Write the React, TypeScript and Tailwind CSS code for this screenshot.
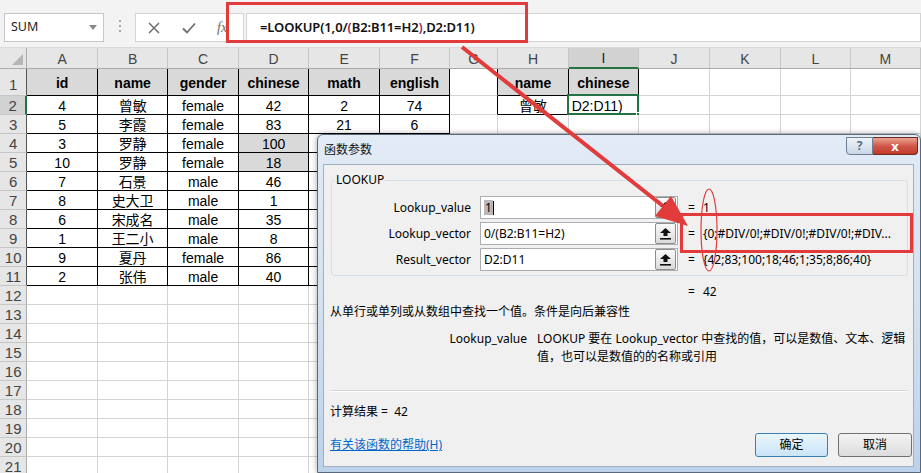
import React from 'react';

const W = [
  'w-[28px]', 'w-[72px]', 'w-[72px]', 'w-[72px]', 'w-[72px]', 'w-[72px]', 'w-[72px]',
  'w-[49px]', 'w-[72px]', 'w-[72px]', 'w-[72px]', 'w-[73px]', 'w-[71px]', 'w-[72px]',
];
const LETTERS = ['', 'A', 'B', 'C', 'D', 'E', 'F', 'G', 'H', 'I', 'J', 'K', 'L', 'M'];

const DATA: string[][] = [
  ['id', 'name', 'gender', 'chinese', 'math', 'english'],
  ['4', '曾敏', 'female', '42', '2', '74'],
  ['5', '李霞', 'female', '83', '21', '6'],
  ['3', '罗静', 'female', '100', '', ''],
  ['10', '罗静', 'female', '18', '', ''],
  ['7', '石景', 'male', '46', '', ''],
  ['8', '史大卫', 'male', '1', '', ''],
  ['6', '宋成名', 'male', '35', '', ''],
  ['1', '王二小', 'male', '8', '', ''],
  ['9', '夏丹', 'female', '86', '', ''],
  ['2', '张伟', 'male', '40', '', ''],
];

function TopBar() {
  return (
    <div className="flex h-[48px] items-start bg-[#f3f3f3] border-b border-[#dadada] font-['Noto_Sans','Noto_Sans_CJK_SC',sans-serif]">
      <div className="mt-[13px] ml-[4px] flex h-[29px] w-[100px] items-center justify-between bg-white border border-[#c6c6c6] pl-[6px] pr-[6px]">
        <span className="text-[12.5px] text-[#222]">SUM</span>
        <svg width="8" height="5" viewBox="0 0 8 5"><polygon points="0,0 8,0 4,5" fill="#8a8a8a" /></svg>
      </div>
      <div className="mt-[20px] ml-[15px] flex flex-col gap-[3px]">
        <div className="h-[2px] w-[2px] bg-[#a8a8a8]" />
        <div className="h-[2px] w-[2px] bg-[#a8a8a8]" />
        <div className="h-[2px] w-[2px] bg-[#a8a8a8]" />
      </div>
      <div className="mt-[13px] ml-[14px] flex h-[29px] w-[109px] items-center bg-white border border-[#d4d4d4]">
        <svg className="ml-[12px]" width="12" height="12" viewBox="0 0 12 12">
          <path d="M1 1 L11 11 M11 1 L1 11" stroke="#6e6e6e" strokeWidth="1.5" />
        </svg>
        <svg className="ml-[22px]" width="14" height="12" viewBox="0 0 14 12">
          <path d="M1 6.5 L5 10.5 L13 1.5" stroke="#6e6e6e" strokeWidth="1.8" fill="none" />
        </svg>
        <span className="ml-[21px] font-['Liberation_Serif',serif] italic text-[14px] text-[#6e6e6e]">fx</span>
      </div>
      <div className="mt-[13px] ml-[2px] flex h-[29px] flex-1 items-center bg-white border border-[#d4d4d4] pl-[13px]">
        <span className="text-[13px] font-semibold text-[#111] tracking-[-0.1px]">
          =LOOKUP(1,0/<span className="text-[#a3245a]">(</span>B2:B11=H2<span className="text-[#a3245a]">)</span>,D2:D11)
        </span>
      </div>
    </div>
  );
}

function HeaderRow() {
  return (
    <div className="flex h-[21px]">
      {W.map((w, i) => {
        if (i === 0) {
          return (
            <div key={i} className={`${w} flex items-end justify-end bg-[#e6e6e6] border-r border-b border-[#ababab] pr-[3px] pb-[3px]`}>
              <svg width="11" height="11" viewBox="0 0 11 11"><polygon points="11,0 11,11 0,11" fill="#b5b5b5" /></svg>
            </div>
          );
        }
        const sel = i === 9;
        return (
          <div
            key={i}
            className={`${w} flex items-center justify-center pt-[2px] text-[14px] ${sel ? 'bg-[#d2d2d2] border-b-2 border-b-[#217346] text-[#1f1f1f]' : 'bg-[#e6e6e6] border-b border-b-[#ababab] text-[#444]'} border-r border-r-[#c6c6c6]`}
          >
            {LETTERS[i]}
          </div>
        );
      })}
    </div>
  );
}

function SheetRow({ r }: { r: number }) {
  const h = r === 1 ? 'h-[27px]' : 'h-[19px]';
  const rowData = r <= 11 ? DATA[r - 1] : null;
  return (
    <div className={`flex ${h}`}>
      {W.map((w, c) => {
        if (c === 0) {
          const sel = r === 2;
          return (
            <div
              key={c}
              className={`${w} flex justify-center text-[15px] leading-[18px] text-[#444] border-b border-b-[#c6c6c6] ${r === 1 ? 'items-end pb-[1px]' : 'items-center pt-[1px]'} ${sel ? 'bg-[#d2d2d2] border-r-2 border-r-[#217346]' : r <= 11 ? 'bg-[#e6e6e6] border-r border-r-[#555]' : 'bg-[#e6e6e6] border-r border-r-[#ababab]'}`}
            >
              {r}
            </div>
          );
        }
        const inTable = r <= 11 && c <= 6;
        const inHI = r <= 2 && (c === 8 || c === 9);
        const gLeft = r <= 2 && c === 7;
        let text = '';
        if (rowData && c <= 6) text = rowData[c - 1];
        if (r === 1 && c === 8) text = 'name';
        if (r === 1 && c === 9) text = 'chinese';
        if (r === 2 && c === 8) text = '曾敏';
        if (r === 2 && c === 9) text = 'D2:D11)';
        const headerFill = r === 1 && (inTable || inHI);
        const grayFill = c === 4 && (r === 4 || r === 5);
        const bg = headerFill || grayFill ? 'bg-[#d9d9d9]' : 'bg-white';
        const bold = r === 1 && (inTable || inHI) ? 'font-bold' : '';
        const br = inTable || inHI || gLeft ? 'border-r-black' : 'border-r-[#d4d4d4]';
        const bb = inTable || inHI ? 'border-b-black' : 'border-b-[#d4d4d4]';
        const isSel = r === 2 && c === 9;
        return (
          <div
            key={c}
            className={`${w} relative flex items-center ${isSel ? 'justify-start pl-[3px]' : 'justify-center'} pt-[2px] border-r border-b ${br} ${bb} ${bg} ${bold} text-[14px] text-black whitespace-nowrap`}
          >
            {text}
            {isSel && (
              <div className="absolute -left-[2px] -top-[2px] -right-[1px] -bottom-[1px] border-2 border-[#217346]">
                <div className="absolute -right-[4px] -bottom-[4px] h-[5px] w-[5px] bg-[#217346] border border-white" />
              </div>
            )}
          </div>
        );
      })}
    </div>
  );
}

function Sheet() {
  const rows = Array.from({ length: 21 }, (_, i) => i + 1);
  return (
    <div className="flex flex-col font-['Liberation_Sans','Noto_Sans_CJK_SC',sans-serif]">
      <HeaderRow />
      {rows.map((r) => (
        <SheetRow key={r} r={r} />
      ))}
    </div>
  );
}

function UploadBtn() {
  return (
    <div className="ml-auto mr-[1px] flex h-[21px] w-[21px] items-center justify-center rounded-[2px] border border-[#8d8d8d] bg-gradient-to-b from-[#fafafa] to-[#dadada]">
      <svg width="11" height="12" viewBox="0 0 11 12">
        <polygon points="5.5,0 11,5 7.5,5 7.5,8 3.5,8 3.5,5 0,5" fill="#111" />
        <rect x="0" y="10" width="11" height="1.6" fill="#111" />
      </svg>
    </div>
  );
}

function Field({ label, value, result, sel }: { label: string; value: string; result: string; sel?: boolean }) {
  return (
    <div className="flex h-[23px] items-center">
      <div className="w-[139px] text-right">{label}</div>
      <div className="ml-[9px] flex h-[23px] w-[198px] items-center border border-[#abadb3] bg-white pl-[3px]">
        {sel ? (
          <span className="flex items-center">
            <span className="bg-[#b9b9b9] px-[1px] leading-[15px]">{value}</span>
            <span className="h-[14px] w-[1px] bg-black" />
          </span>
        ) : (
          <span>{value}</span>
        )}
        <UploadBtn />
      </div>
      <span className="ml-[10px]">=</span>
      <span className="ml-[8px] whitespace-nowrap">{result}</span>
    </div>
  );
}

function Dialog() {
  return (
    <div className="absolute left-[317px] top-[134px] h-[339px] w-[604px] rounded-t-[6px] border border-[#59687a] bg-gradient-to-b from-[#e2ebf6] via-[#d3e1f0] to-[#bcd2ea] shadow-[0_0_6px_rgba(0,0,0,0.35)] font-['Noto_Sans','Noto_Sans_CJK_SC',sans-serif] text-[12px] text-black">
      <div className="flex h-[29px] items-start">
        <div className="pl-[6px] pt-[7px] leading-[16px] text-[#111]">函数参数</div>
        <div className="ml-auto mr-[2px] mt-[2px] flex">
          <div className="flex h-[18px] w-[27px] items-center justify-center rounded-bl-[4px] border border-[#6f7f93] bg-gradient-to-b from-[#eef3f9] to-[#c9d6e5] text-[12px] font-bold leading-none text-[#5b6b80]">
            ?
          </div>
          <div className="flex h-[18px] w-[45px] items-center justify-center rounded-br-[4px] border border-l-0 border-[#6b2a22] bg-gradient-to-b from-[#e8a493] via-[#d0574a] to-[#c23a28] text-[13px] font-bold leading-none text-white">
            x
          </div>
        </div>
      </div>
      <div className="ml-[5px] flex h-[303px] w-[591px] flex-col border border-[#9fb0c4] bg-[#f0f0f0]">
        <div className="relative ml-[7px] mt-[15px] h-[96px] w-[577px] rounded-[3px] border border-[#d5dfe5]">
          <div className="absolute -top-[9px] left-[3px] bg-[#f0f0f0] px-[1px] leading-[16px]">LOOKUP</div>
          <div className="flex flex-col gap-[3px] pt-[15px]">
            <Field label="Lookup_value" value="1" result="1" sel />
            <Field label="Lookup_vector" value="0/(B2:B11=H2)" result="{0;#DIV/0!;#DIV/0!;#DIV/0!;#DIV..." />
            <Field label="Result_vector" value="D2:D11" result="{42;83;100;18;46;1;35;8;86;40}" />
          </div>
        </div>
        <div className="mt-[6px] flex h-[20px] items-center pl-[364px]">
          <span>=</span>
          <span className="ml-[8px]">42</span>
        </div>
        <div className="flex h-[20px] items-center pl-[6px]">从单行或单列或从数组中查找一个值。条件是向后兼容性</div>
        <div className="mt-[8px] flex leading-[18px]">
          <div className="w-[203px] text-right">Lookup_value</div>
          <div className="ml-[10px] whitespace-nowrap">
            LOOKUP 要在 Lookup_vector 中查找的值，可以是数值、文本、逻辑
            <br />
            值，也可以是数值的的名称或引用
          </div>
        </div>
        <div className="mx-[6px] mt-[24px] h-[2px] border-t border-b border-t-[#d5d5d5] border-b-white" />
        <div className="mt-[10px] flex h-[20px] items-center whitespace-pre pl-[6px]">计算结果 =  42</div>
        <div className="mt-[11px] flex h-[24px] items-center">
          <span className="pl-[6px] text-[#0066cc] underline">有关该函数的帮助(H)</span>
          <div className="ml-auto mr-[1px] flex gap-[10px]">
            <div className="flex h-[24px] w-[73px] items-center justify-center rounded-[3px] border border-[#3c7fb1] bg-gradient-to-b from-[#eaf6fd] to-[#c9e4f6]">确定</div>
            <div className="flex h-[24px] w-[74px] items-center justify-center rounded-[3px] border border-[#707070] bg-gradient-to-b from-[#f3f3f3] to-[#dcdcdc]">取消</div>
          </div>
        </div>
      </div>
    </div>
  );
}

function Annotations() {
  return (
    <svg className="pointer-events-none absolute left-0 top-0" width="921" height="473" viewBox="0 0 921 473">
      <rect x="227.5" y="3.5" width="299" height="38" fill="none" stroke="#e23b3b" strokeWidth="3" />
      <rect x="681.5" y="214.5" width="230" height="37" fill="none" stroke="#e23b3b" strokeWidth="3" />
      <ellipse cx="709" cy="230" rx="8" ry="41" fill="none" stroke="#e23b3b" strokeWidth="1.2" />
      <line x1="462" y1="47" x2="663" y2="206" stroke="#e23b3b" strokeWidth="4" />
      <polygon points="688,226 655,216 671,196" fill="#e23b3b" />
    </svg>
  );
}

export default function App() {
  return (
    <div className="relative h-[473px] w-[921px] overflow-hidden bg-white">
      <TopBar />
      <Sheet />
      <Dialog />
      <Annotations />
    </div>
  );
}
